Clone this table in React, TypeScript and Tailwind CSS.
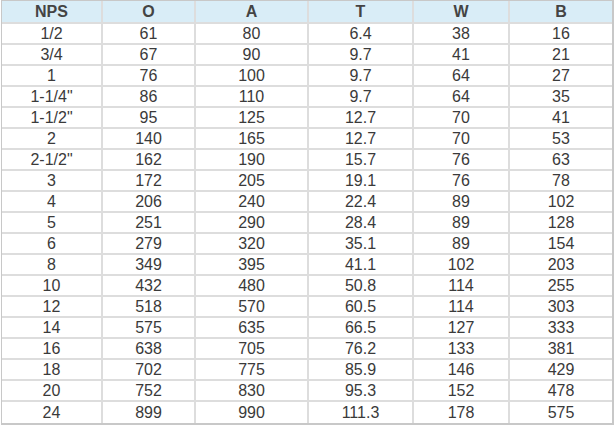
const headers = ["NPS", "O", "A", "T", "W", "B"];

// pipe flange dimensions (mm)
const rows = [
  ["1/2", "61", "80", "6.4", "38", "16"],
  ["3/4", "67", "90", "9.7", "41", "21"],
  ["1", "76", "100", "9.7", "64", "27"],
  ["1-1/4\"", "86", "110", "9.7", "64", "35"],
  ["1-1/2\"", "95", "125", "12.7", "70", "41"],
  ["2", "140", "165", "12.7", "70", "53"],
  ["2-1/2\"", "162", "190", "15.7", "76", "63"],
  ["3", "172", "205", "19.1", "76", "78"],
  ["4", "206", "240", "22.4", "89", "102"],
  ["5", "251", "290", "28.4", "89", "128"],
  ["6", "279", "320", "35.1", "89", "154"],
  ["8", "349", "395", "41.1", "102", "203"],
  ["10", "432", "480", "50.8", "114", "255"],
  ["12", "518", "570", "60.5", "114", "303"],
  ["14", "575", "635", "66.5", "127", "333"],
  ["16", "638", "705", "76.2", "133", "381"],
  ["18", "702", "775", "85.9", "146", "429"],
  ["20", "752", "830", "95.3", "152", "478"],
  ["24", "899", "990", "111.3", "178", "575"],
];

export default function App() {
  return (
    <div className="w-[616px] h-[425px] bg-white pl-px font-['Liberation_Sans',Arial,sans-serif]">
      <div className="w-[613px] grid grid-cols-[101px_93px_113px_105px_96px_102px] border-t border-l border-r-2 border-b-2 border-[#c8c8c8]">
        {headers.map((h, i) => (
          <div
            key={h}
            className={`h-[23px] flex items-center justify-center bg-[#d9edf7] border-b-2 border-[#dddddd] text-[16px] font-bold text-[#444444] ${
              i < 5 ? "border-r-2" : ""
            }`}
          >
            {h}
          </div>
        ))}
        {rows.map((r, ri) =>
          r.map((c, ci) => (
            <div
              key={ri + "-" + ci}
              className={`h-[21px] flex items-center justify-center border-[#dddddd] text-[16px] leading-[19px] text-[#3a3a3a] ${
                ci < 5 ? "border-r-2" : ""
              } ${ri < rows.length - 1 ? "border-b-2" : "h-[19px]"}`}
            >
              {c}
            </div>
          ))
        )}
      </div>
    </div>
  );
}
